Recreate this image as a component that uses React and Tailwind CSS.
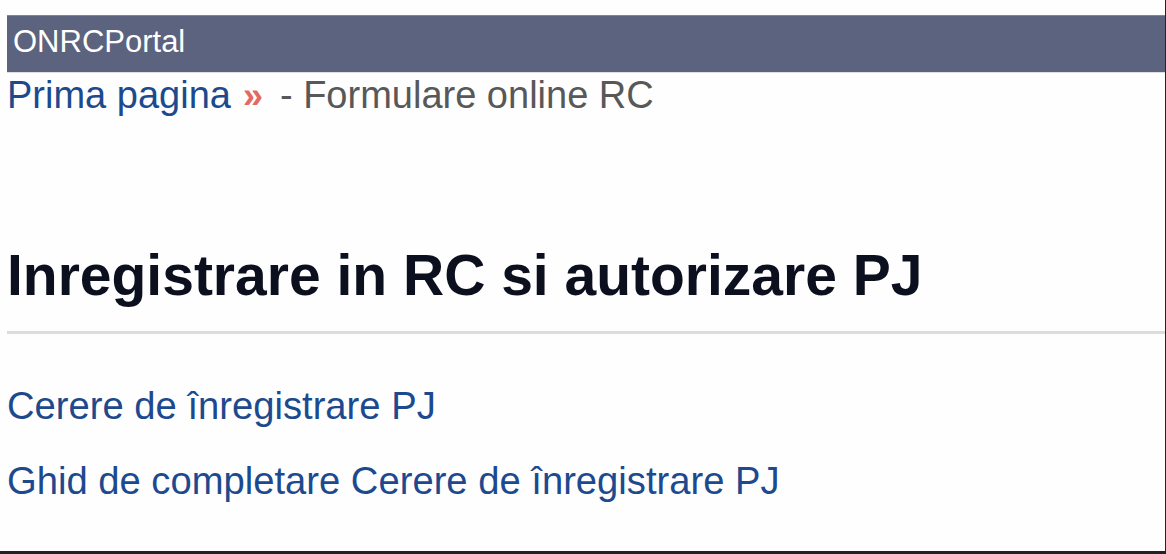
export default function App() {
  return (
    <div className="w-[1166px] h-[554px] bg-[#fefefe] border-r border-b-[3px] border-[#222222] pl-[7px] pt-[15px] font-['Liberation_Sans',Arial,sans-serif] overflow-hidden">
      <div className="h-[58px] bg-[#5c637e] border-t border-[#7d849c] border-b border-b-[#dcdee4] pl-[6px] pt-[10px] text-[31px] leading-none text-white">
        ONRCPortal
      </div>

      <div className="h-[44px] text-[38px] leading-[44px] whitespace-nowrap">
        <a href="#" className="text-[#1d4a8e]">Prima pagina</a>
        <span className="text-[#e36a62] font-bold text-[36px] ml-[12px] mr-[17px]">»</span>
        <span className="text-[#585858]">- Formulare online RC</span>
      </div>

      <h1 className="mt-[130px] text-[57px] leading-none font-bold text-[#0b0f1e]">
        Inregistrare in RC si autorizare PJ
      </h1>

      <div className="mt-[27px] h-[3px] bg-[#dcdcdc]" />

      <div className="flex flex-col gap-[37px] mt-[53px] text-[38.2px] leading-none text-[#1d4a8e]">
        <a href="#">Cerere de înregistrare PJ</a>
        <a href="#">Ghid de completare Cerere de înregistrare PJ</a>
      </div>
    </div>
  )
}
